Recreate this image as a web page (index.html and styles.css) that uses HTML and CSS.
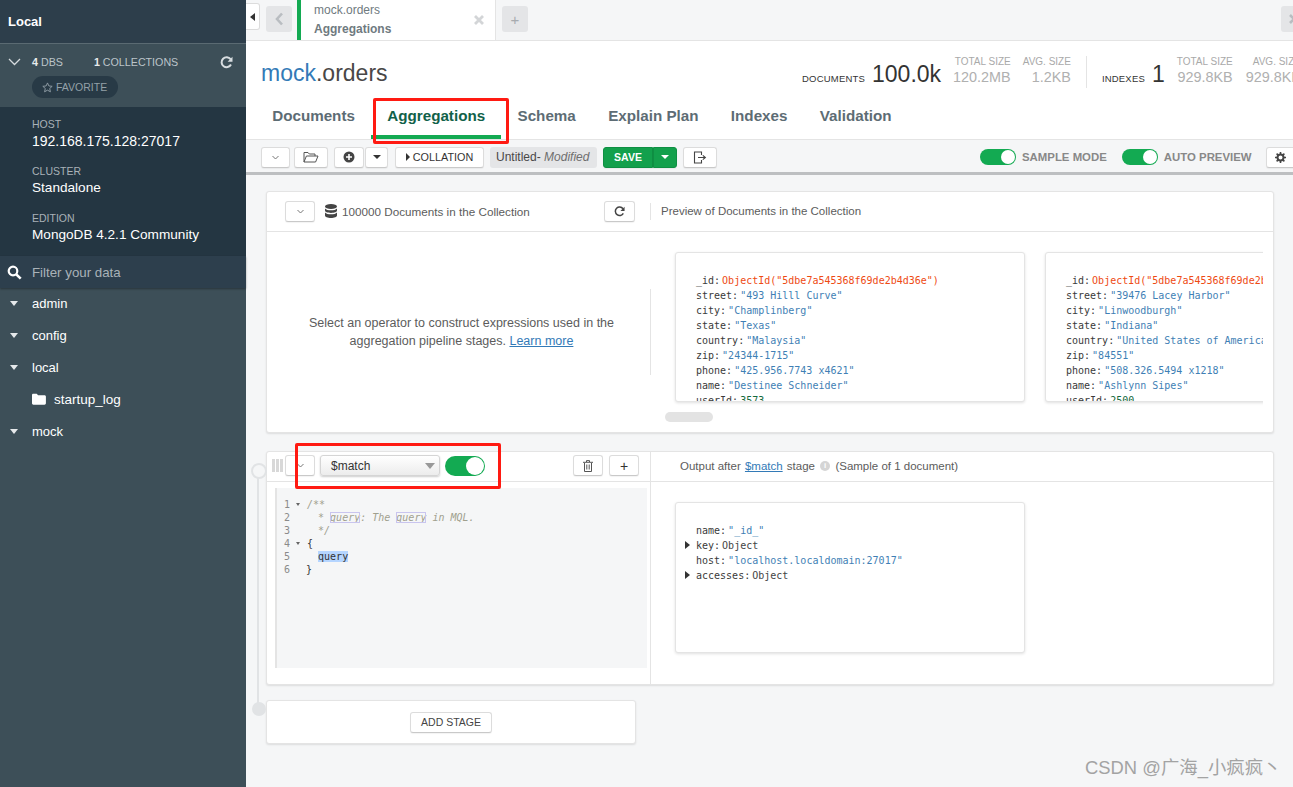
FILE: index.html
```html
<!DOCTYPE html>
<html lang="en">
<head>
    <meta charset="utf-8">
    <title>MongoDB Compass - mock.orders</title>
    <link rel="stylesheet" href="styles.css">
</head>
<body>
    <div class="app">
        <aside class="sidebar">
            <div class="sidebarTitle">Local</div>
            <div class="statsBlock">
                <div class="statsRow">
                    <svg class="statsChevron" width="13" height="8" viewBox="0 0 13 8"><path d="M1 1l5.5 5.5L12 1" fill="none" stroke="#d5dadd" stroke-width="1.3"/></svg>
                    <span class="statCount"><b>4</b> DBS</span>
                    <span class="statCount statCollections"><b>1</b> COLLECTIONS</span>
                    <svg class="statsRefresh" width="13" height="13" viewBox="0 0 13 13"><path d="M10.6 3.2A5 5 0 1 0 11 8.6" fill="none" stroke="#d8dde0" stroke-width="2"/><path d="M12.5 .8v5H7.6z" fill="#d8dde0"/></svg>
                </div>
                <div class="favorite">
                    <svg width="11" height="11" viewBox="0 0 12 12"><path d="M6 1l1.5 3.3 3.6.4-2.7 2.4.8 3.6L6 8.9l-3.2 1.8.8-3.6L.9 4.7l3.6-.4z" fill="none" stroke="#93a0a8" stroke-width="1"/></svg>
                    FAVORITE
                </div>
            </div>
            <div class="instanceInfo">
                <p class="infoLabel">HOST</p>
                <p class="infoValue infoHost">192.168.175.128:27017</p>
                <p class="infoLabel">CLUSTER</p>
                <p class="infoValue">Standalone</p>
                <p class="infoLabel">EDITION</p>
                <p class="infoValue">MongoDB 4.2.1 Community</p>
            </div>
            <div class="filterBox">
                <svg width="15" height="15" viewBox="0 0 15 15"><circle cx="6" cy="6" r="4.3" fill="none" stroke="#fff" stroke-width="2.2"/><path d="M9.3 9.3l4.4 4.4" stroke="#fff" stroke-width="2.6"/></svg>
                <span>Filter your data</span>
            </div>
            <ul class="dbList">
                <li class="dbRow"><i class="caret"></i>admin</li>
                <li class="dbRow"><i class="caret"></i>config</li>
                <li class="dbRow"><i class="caret"></i>local</li>
                <li class="dbRow collRow">
                    <svg width="14" height="12" viewBox="0 0 14 12"><path d="M0 2.2C0 1.3.6.8 1.4.8h3.3l1.4 1.5h6.4c.8 0 1.4.6 1.4 1.4v6.6c0 .8-.6 1.4-1.4 1.4H1.4C.6 11.7 0 11.1 0 10.3z" fill="#fff"/></svg>
                    startup_log
                </li>
                <li class="dbRow"><i class="caret"></i>mock</li>
            </ul>
        </aside>

        <main class="main">
            <div class="tabBar">
                <button class="collapseBtn"><i class="caretLeft"></i></button>
                <button class="tabNav">
                    <svg width="9" height="14" viewBox="0 0 9 14"><path d="M7 1.5L2 7l5 5.5" fill="none" stroke="#b9bdc1" stroke-width="2.6"/></svg>
                </button>
                <div class="openTab">
                    <div>
                        <p class="openTabNs">mock.orders</p>
                        <p class="openTabName">Aggregations</p>
                    </div>
                    <svg width="10" height="10" viewBox="0 0 10 10"><path d="M1 1l8 8M9 1l-8 8" stroke="#d3d5d7" stroke-width="2.8"/></svg>
                </div>
                <button class="tabNav tabAdd">+</button>
                <button class="tabNav tabEnd">
                    <svg width="10" height="10" viewBox="0 0 10 10"><path d="M1 1l8 8M9 1l-8 8" stroke="#b9bdc1" stroke-width="2.6"/></svg>
                </button>
            </div>

            <header class="collHeader">
                <div class="collTop">
                    <h1 class="collName"><span class="dbName">mock</span>.orders</h1>
                    <div class="collStats">
                        <span class="statName">DOCUMENTS</span>
                        <span class="statBig">100.0k</span>
                        <div class="statSmall statGap1"><span>TOTAL SIZE</span><em>120.2MB</em></div>
                        <div class="statSmall statGap2"><span>AVG. SIZE</span><em>1.2KB</em></div>
                        <div class="statDivider"></div>
                        <span class="statName">INDEXES</span>
                        <span class="statBig">1</span>
                        <div class="statSmall statGap3"><span>TOTAL SIZE</span><em>929.8KB</em></div>
                        <div class="statSmall statGap4"><span>AVG. SIZE</span><em>929.8KB</em></div>
                    </div>
                </div>
                <nav class="collTabs">
                    <a class="collTab">Documents</a>
                    <a class="collTab active">Aggregations</a>
                    <a class="collTab">Schema</a>
                    <a class="collTab">Explain Plan</a>
                    <a class="collTab">Indexes</a>
                    <a class="collTab">Validation</a>
                </nav>
            </header>

            <div class="toolbar">
                <button class="btn btnChevron"><svg width="7" height="5" viewBox="0 0 7 5"><path d="M.5 1l3 3 3-3" fill="none" stroke="#777" stroke-width="1"/></svg></button>
                <button class="btn btnFolder"><svg width="16" height="12" viewBox="0 0 16 12"><path d="M1 11V1.5h4l1.3 1.5H12v2M1 11l2.4-6H15l-2.4 6z" fill="none" stroke="#555" stroke-width="1"/></svg></button>
                <button class="btn btnPlus"><svg width="12" height="12" viewBox="0 0 12 12"><circle cx="6" cy="6" r="5.500" fill="#444"/><path d="M6 3v6M3 6h6" stroke="#fff" stroke-width="1.600"/></svg></button>
                <button class="btn btnCaret"><i class="caretDown"></i></button>
                <button class="btn btnCollation"><i class="caretRight"></i>COLLATION</button>
                <div class="pipelineName">Untitled<span>-&nbsp;</span><em>Modified</em></div>
                <button class="btn btnSave">SAVE</button>
                <button class="btn btnSaveCaret"><i class="caretDown caretWhite"></i></button>
                <button class="btn btnExport"><svg width="14" height="13" viewBox="0 0 14 13"><path d="M8.500 4V1H1.500v11h7V9" fill="none" stroke="#444" stroke-width="1.100"/><path d="M5 6.500h6.500M9.800 4.300l2.600 2.200-2.600 2.200" fill="none" stroke="#444" stroke-width="1.100"/></svg></button>
                <div class="toolbarRight">
                    <span class="toggle toggleSmall"><i></i></span>
                    <span class="toggleLabel">SAMPLE MODE</span>
                    <span class="toggle toggleSmall toggleGap"><i></i></span>
                    <span class="toggleLabel">AUTO PREVIEW</span>
                    <button class="btn btnGear"><svg width="11" height="11" viewBox="0 0 11 11"><circle cx="5.500" cy="5.500" r="3" fill="none" stroke="#444" stroke-width="2"/><path d="M5.500 0v2M5.500 9v2M0 5.500h2M9 5.500h2M1.600 1.600L3 3M8 8l1.400 1.400M1.600 9.400L3 8M8 3l1.400-1.400" stroke="#444" stroke-width="1.600"/></svg></button>
                </div>
            </div>

            <div class="workspace">
                <section class="card inputCard">
                    <div class="cardHeader">
                        <div class="cardHeaderLeft">
                            <button class="btn btnChevronLg"><svg width="7" height="5" viewBox="0 0 7 5"><path d="M.5 1l3 3 3-3" fill="none" stroke="#777" stroke-width="1"/></svg></button>
                            <svg class="dbIcon" width="12" height="14" viewBox="0 0 12 14"><ellipse cx="6" cy="2.500" rx="6" ry="2.500" fill="#444"/><path d="M0 4.400c1 1.300 3.400 1.900 6 1.900s5-.6 6-1.900v2.200C12 8 9.300 9 6 9S0 8 0 6.600zM0 8.400c1 1.300 3.400 1.900 6 1.900s5-.6 6-1.900v3.100C12 12.900 9.300 14 6 14s-6-1.100-6-2.500z" fill="#444"/></svg>
                            <span class="docCount">100000 Documents in the Collection</span>
                            <button class="btn btnRefresh"><svg width="11" height="11" viewBox="0 0 13 13"><path d="M10.600 3.200A5 5 0 1 0 11 8.600" fill="none" stroke="#444" stroke-width="1.800"/><path d="M12.500 .8v5H7.600z" fill="#444"/></svg></button>
                        </div>
                        <div class="headerDivider"></div>
                        <span class="previewTitle">Preview of Documents in the Collection</span>
                    </div>
                    <div class="inputBody">
                        <div class="inputHint">
                            <p>Select an operator to construct expressions used in the aggregation pipeline stages. <a>Learn more</a></p>
                        </div>
                        <div class="previewScroll">
                            <div class="docCards">
                                <div class="docCard">
                                    <div class="docLine"><span class="key">_id:</span><span class="oid">ObjectId("5dbe7a545368f69de2b4d36e")</span></div>
                                    <div class="docLine"><span class="key">street:</span><span class="str">"493 Hilll Curve"</span></div>
                                    <div class="docLine"><span class="key">city:</span><span class="str">"Champlinberg"</span></div>
                                    <div class="docLine"><span class="key">state:</span><span class="str">"Texas"</span></div>
                                    <div class="docLine"><span class="key">country:</span><span class="str">"Malaysia"</span></div>
                                    <div class="docLine"><span class="key">zip:</span><span class="str">"24344-1715"</span></div>
                                    <div class="docLine"><span class="key">phone:</span><span class="str">"425.956.7743 x4621"</span></div>
                                    <div class="docLine"><span class="key">name:</span><span class="str">"Destinee Schneider"</span></div>
                                    <div class="docLine"><span class="key">userId:</span><span class="num">3573</span></div>
                                </div>
                                <div class="docCard">
                                    <div class="docLine"><span class="key">_id:</span><span class="oid">ObjectId("5dbe7a545368f69de2b4d36f")</span></div>
                                    <div class="docLine"><span class="key">street:</span><span class="str">"39476 Lacey Harbor"</span></div>
                                    <div class="docLine"><span class="key">city:</span><span class="str">"Linwoodburgh"</span></div>
                                    <div class="docLine"><span class="key">state:</span><span class="str">"Indiana"</span></div>
                                    <div class="docLine"><span class="key">country:</span><span class="str">"United States of America"</span></div>
                                    <div class="docLine"><span class="key">zip:</span><span class="str">"84551"</span></div>
                                    <div class="docLine"><span class="key">phone:</span><span class="str">"508.326.5494 x1218"</span></div>
                                    <div class="docLine"><span class="key">name:</span><span class="str">"Ashlynn Sipes"</span></div>
                                    <div class="docLine"><span class="key">userId:</span><span class="num">2500</span></div>
                                </div>
                            </div>
                            <div class="scrollThumb"></div>
                        </div>
                    </div>
                </section>

                <div class="stagesWrap">
                    <section class="card stageCard">
                        <div class="cardHeader stageHeader">
                            <div class="stageLeft">
                                <span class="grip"></span>
                                <button class="btn btnChevronLg btnStage"><svg width="7" height="5" viewBox="0 0 7 5"><path d="M.5 1l3 3 3-3" fill="none" stroke="#777" stroke-width="1"/></svg></button>
                                <div class="stageSelect">$match<i class="caretSelect"></i></div>
                                <span class="toggle toggleBig"><i></i></span>
                                <button class="btn btnStage btnTrash"><svg width="10" height="12" viewBox="0 0 10 12"><path d="M1.500 3v8.500h7V3M0 2.300h10M3.500 2V.6h3V2M3.800 4.500v5M6.200 4.500v5" fill="none" stroke="#555" stroke-width="1"/></svg></button>
                                <button class="btn btnStage btnAdd">+</button>
                            </div>
                            <div class="stageOutTitle">Output after <a>$match</a> stage <span class="infoDot">i</span> (Sample of 1 document)</div>
                        </div>
                        <div class="stageBody">
                            <div class="editorCol">
                                <div class="editor">
                                    <div class="codeLine"><span class="ln">1</span><i class="fold"></i><span class="cmt">/**</span></div>
                                    <div class="codeLine"><span class="ln">2</span><i class="foldNone"></i><span class="cmt">&nbsp;&nbsp;* <mark class="hit">query</mark>: The <mark class="hit">query</mark> in MQL.</span></div>
                                    <div class="codeLine"><span class="ln">3</span><i class="foldNone"></i><span class="cmt">&nbsp;&nbsp;*/</span></div>
                                    <div class="codeLine"><span class="ln">4</span><i class="fold"></i><span>{</span></div>
                                    <div class="codeLine"><span class="ln">5</span><i class="foldNone"></i><span>&nbsp;&nbsp;<mark class="sel">query</mark></span></div>
                                    <div class="codeLine"><span class="ln">6</span><i class="foldNone"></i><span>}</span></div>
                                </div>
                            </div>
                            <div class="outputCol">
                                <div class="docCard outCard">
                                    <div class="docLine"><span class="key">name:</span><span class="str">"_id_"</span></div>
                                    <div class="docLine"><i class="expand"></i><span class="key">key:</span><span class="val">Object</span></div>
                                    <div class="docLine"><span class="key">host:</span><span class="str">"localhost.localdomain:27017"</span></div>
                                    <div class="docLine"><i class="expand"></i><span class="key">accesses:</span><span class="val">Object</span></div>
                                </div>
                            </div>
                        </div>
                    </section>
                    <section class="card addStage">
                        <button class="btn btnAddStage">ADD STAGE</button>
                    </section>
                </div>
            </div>
        </main>
    </div>

    <div class="redBox redTab"></div>
    <div class="redBox redStage"></div>
    <div class="watermark">CSDN @广海_小疯疯丶</div>
</body>
</html>
```

FILE: styles.css
```css
* {
    box-sizing: border-box;
    margin: 0;
    padding: 0;
}
html, body {
    height: 100%;
    overflow: hidden;
}
body {
    font-family: "Liberation Sans", Arial, sans-serif;
    color: #494747;
    background: #f5f6f7;
}
button {
    font-family: inherit;
}
.app {
    display: flex;
    height: 787px;
}

/* sidebar */
.sidebar {
    width: 246px;
    flex: none;
    background: #3d4f58;
    color: #fff;
}
.sidebarTitle {
    height: 44px;
    padding: 14px 0 0 8px;
    font-size: 13px;
    font-weight: bold;
    background: #2d3e4b;
    border-bottom: 1px solid #5a6a72;
}
.statsBlock {
    height: 63px;
    padding-top: 11px;
    background: #3d4f58;
}
.statsRow {
    display: flex;
    align-items: center;
    height: 14px;
    font-size: 10.7px;
    color: #bcc4c9;
}
.statsChevron {
    margin-left: 8px;
    margin-right: 11px;
}
.statCount b {
    color: #e8ebec;
}
.statCollections {
    margin-left: 31px;
}
.statsRefresh {
    margin-left: auto;
    margin-right: 13px;
}
.favorite {
    display: flex;
    align-items: center;
    gap: 3px;
    width: 86px;
    height: 22px;
    margin: 7px 0 0 32px;
    padding-left: 10px;
    border-radius: 11px;
    background: #283a46;
    font-size: 10.5px;
    color: #93a0a8;
}
.instanceInfo {
    height: 149px;
    padding: 10px 0 0 32px;
    background: #243642;
}
.infoLabel {
    font-size: 10.5px;
    line-height: 14px;
    color: #a9b2b8;
}
.infoValue {
    font-size: 13.6px;
    line-height: 20px;
    color: #fff;
    margin-bottom: 13px;
}
.infoHost {
    font-size: 14px;
}
.filterBox {
    display: flex;
    align-items: center;
    height: 32px;
    padding-left: 7px;
    gap: 10px;
    background: #2d3f4d;
    font-size: 13.3px;
    color: #a9b2b8;
    box-shadow: 0 1px 2px rgba(0,0,0,.35);
    position: relative;
}
.dbList {
    list-style: none;
    margin-top: -1px;
}
.dbRow {
    display: flex;
    align-items: center;
    height: 32px;
    padding-left: 32px;
    font-size: 13px;
    color: #fff;
    position: relative;
}
.caret {
    width: 0;
    height: 0;
    margin-left: -22px;
    margin-right: 14px;
    border-left: 4px solid transparent;
    border-right: 4px solid transparent;
    border-top: 5px solid #e6e9eb;
}
.collRow {
    gap: 8px;
    font-size: 13.5px;
}

/* tabs */
.main {
    flex: 1;
    min-width: 0;
    overflow: hidden;
}
.tabBar {
    display: flex;
    height: 41px;
    background: #f5f6f7;
    border-bottom: 1px solid #e4e4e4;
}
.collapseBtn {
    width: 14px;
    height: 27px;
    margin-top: 3px;
    background: #fff;
    border: 1px solid #dcdcdc;
    border-left: 0;
    border-radius: 0 3px 3px 0;
    display: flex;
    align-items: center;
    justify-content: center;
    flex: none;
}
.caretLeft {
    border-top: 4px solid transparent;
    border-bottom: 4px solid transparent;
    border-right: 5px solid #333;
}
.tabNav {
    width: 26px;
    height: 26px;
    margin: 6px 0 0 6px;
    background: #e4e5e7;
    border: 0;
    border-radius: 3px;
    display: flex;
    align-items: center;
    justify-content: center;
    flex: none;
}
.openTab {
    width: 199px;
    height: 40px;
    margin-left: 5px;
    padding: 0 11px 1px 13px;
    background: #fff;
    border-left: 4px solid #13aa52;
    border-right: 1px solid #e4e4e4;
    display: flex;
    justify-content: space-between;
    align-items: center;
    flex: none;
}
.openTabNs {
    font-size: 12px;
    line-height: 18px;
    color: #6f7a80;
}
.openTabName {
    font-size: 12px;
    font-weight: bold;
    line-height: 20px;
    color: #6f7a80;
}
.tabAdd {
    font-size: 15px;
    color: #a7abaf;
}
.tabEnd {
    margin-left: 753px;
}

/* collection header */
.collHeader {
    height: 98px;
    background: #fff;
}
.collTop {
    display: flex;
    height: 57px;
    padding: 16px 0 0 15px;
    white-space: nowrap;
}
.collName {
    font-size: 23px;
    font-weight: normal;
    line-height: 32px;
    color: #494747;
    width: 541px;
    flex: none;
}
.dbName {
    color: #337ab7;
}
.collStats {
    display: flex;
    align-items: flex-start;
    flex: none;
}
.statName {
    font-size: 9.5px;
    letter-spacing: .2px;
    color: #333;
    margin-top: 16px;
}
.statBig {
    font-size: 23px;
    line-height: 28px;
    margin: 3px 0 0 7px;
    color: #333;
}
.statSmall {
    display: flex;
    flex-direction: column;
    align-items: flex-end;
    margin-top: -2px;
}
.statSmall span {
    font-size: 10px;
    line-height: 14px;
    color: #a9a9a9;
}
.statSmall em {
    font-style: normal;
    font-size: 14.4px;
    line-height: 17px;
    color: #b0b0b0;
}
.statGap1 {
    margin-left: 12px;
}
.statGap2 {
    margin-left: 12px;
}
.statDivider {
    width: 1px;
    height: 32px;
    margin: -1px 15px 0 15px;
    background: #e4e4e4;
}
.statGap3 {
    margin-left: 12px;
}
.statGap4 {
    margin-left: 13px;
}
.collTabs {
    display: flex;
    padding-left: 10px;
    height: 41px;
}
.collTab {
    padding: 8px 16.2px 0;
    font-size: 15.2px;
    font-weight: bold;
    line-height: 20px;
    color: #5d6c74;
    border-bottom: 4px solid transparent;
}
.collTab.active {
    color: #116149;
    border-bottom-color: #13aa52;
    border-top-right-radius: 3px;
}

/* shared buttons */
.btn {
    display: flex;
    align-items: center;
    justify-content: center;
    flex: none;
    height: 21px;
    background: #fff;
    border: 1px solid #dcdcdc;
    border-bottom-color: #c9c9c9;
    border-radius: 3px;
    color: #333;
    box-shadow: 0 1px 1px rgba(0,0,0,.05);
}

/* toolbar */
.toolbar {
    display: flex;
    align-items: center;
    height: 36px;
    padding: 2px 0 0 15px;
    background: #f5f6f7;
    border-top: 1px solid #e4e4e4;
    border-bottom: 3px solid #bdbfc1;
    white-space: nowrap;
}
.btnChevron {
    width: 29px;
}
.btnFolder {
    width: 34px;
    margin-left: 4px;
}
.btnPlus {
    width: 30px;
    margin-left: 6px;
}
.btnCaret {
    width: 23px;
    margin-left: 1px;
}
.caretDown {
    border-left: 4px solid transparent;
    border-right: 4px solid transparent;
    border-top: 4px solid #333;
}
.caretWhite {
    border-top-color: #fff;
}
.btnCollation {
    width: 89px;
    margin-left: 7px;
    font-size: 10.8px;
    gap: 3px;
}
.caretRight {
    border-top: 4px solid transparent;
    border-bottom: 4px solid transparent;
    border-left: 4px solid #333;
}
.pipelineName {
    width: 107px;
    height: 21px;
    margin-left: 6px;
    padding-left: 6px;
    background: #e4e5e7;
    border-radius: 3px;
    font-size: 12px;
    line-height: 21px;
    color: #494747;
    flex: none;
}
.pipelineName em {
    color: #6f6f6f;
}
.btnSave {
    width: 50px;
    margin-left: 6px;
    background: #13a04c;
    border-color: #0f8f43;
    border-radius: 3px 0 0 3px;
    color: #fff;
    font-size: 10.5px;
    font-weight: bold;
}
.btnSaveCaret {
    width: 24px;
    background: #13a04c;
    border-color: #0f8f43;
    border-radius: 0 3px 3px 0;
}
.btnExport {
    width: 34px;
    margin-left: 6px;
}
.toolbarRight {
    display: flex;
    align-items: center;
    margin-left: 263px;
    flex: none;
}
.toggle {
    display: block;
    position: relative;
    flex: none;
    background: #13aa52;
}
.toggle i {
    position: absolute;
    background: #fff;
    border-radius: 50%;
}
.toggleSmall {
    width: 36px;
    height: 16px;
    border-radius: 8px;
}
.toggleSmall i {
    right: 1px;
    top: 1px;
    width: 14px;
    height: 14px;
}
.toggleGap {
    margin-left: 15px;
}
.toggleLabel {
    margin-left: 6px;
    font-size: 11.4px;
    color: #888;
    font-weight: bold;
}
.btnGear {
    width: 30px;
    margin-left: 14px;
}

/* workspace */
.workspace {
    height: 612px;
    padding: 16px 19px 0 20px;
}
.card {
    background: #fff;
    border: 1px solid #e4e4e4;
    border-radius: 3px;
    box-shadow: 0 1px 2px rgba(0,0,0,.1);
}
.inputCard {
    height: 242px;
}
.cardHeader {
    display: flex;
    align-items: center;
    height: 40px;
    padding-bottom: 1px;
    border-bottom: 1px solid #e4e4e4;
}
.cardHeaderLeft {
    display: flex;
    align-items: center;
    width: 368px;
    padding-left: 18px;
    flex: none;
}
.btnChevronLg {
    width: 30px;
}
.dbIcon {
    margin-left: 10px;
}
.docCount {
    margin-left: 5px;
    font-size: 11.7px;
    color: #5c5c5c;
}
.btnRefresh {
    width: 31px;
    margin-left: auto;
}
.headerDivider {
    width: 1px;
    height: 17px;
    margin-left: 15px;
    background: #e4e4e4;
}
.previewTitle {
    margin-left: 10px;
    font-size: 11.5px;
    color: #5c5c5c;
}
.inputBody {
    display: flex;
    height: 200px;
}
.inputHint {
    width: 384px;
    flex: none;
    height: 86px;
    margin-top: 57px;
    padding-left: 6px;
    display: flex;
    align-items: center;
    justify-content: center;
    border-right: 1px solid #e4e4e4;
    text-align: center;
}
.inputHint p {
    width: 340px;
    font-size: 12.5px;
    line-height: 18px;
    color: #5c5c5c;
}
.inputHint a, .stageOutTitle a {
    color: #337ab7;
    text-decoration: underline;
}
.previewScroll {
    position: relative;
    width: 612px;
    overflow: hidden;
    padding: 20px 0 0 24px;
}
.docCards {
    display: flex;
    gap: 20px;
    width: 800px;
}
.docCard {
    width: 350px;
    height: 150px;
    flex: none;
    padding: 20px 0 0 20px;
    background: #fff;
    border: 1px solid #e4e4e4;
    border-radius: 3px;
    box-shadow: 0 1px 3px rgba(0,0,0,.12);
    overflow: hidden;
    font-family: "DejaVu Sans Mono", "Liberation Mono", monospace;
    font-size: 10px;
    line-height: 15px;
    white-space: nowrap;
}
.docLine {
    position: relative;
}
.key {
    color: #3a3a3a;
    margin-right: 2px;
}
.oid {
    color: #ee4a12;
}
.str {
    color: #3f7fb5;
}
.num {
    color: #14693c;
}
.val {
    color: #444;
}
.scrollThumb {
    width: 48px;
    height: 10px;
    margin: 10px 0 0 -10px;
    border-radius: 5px;
    background: #e3e3e3;
}

/* stages */
.stagesWrap {
    position: relative;
    margin-top: 18px;
}
.stagesWrap::before {
    content: "";
    position: absolute;
    left: -9px;
    top: 18px;
    width: 2px;
    height: 238px;
    background: #e1e3e5;
}
.stageCard::before, .addStage::before {
    content: "";
    position: absolute;
    left: -15px;
    width: 12px;
    height: 12px;
    border-radius: 50%;
    background: #f5f6f7;
    border: 2px solid #e1e3e5;
}
.stageCard::before {
    top: 12px;
}
.addStage::before {
    top: 251px;
    left: -14px;
    width: 10px;
    height: 10px;
    background: #e1e3e5;
}
.stageCard {
    height: 234px;
}
.stageHeader {
    height: 30px;
    padding-bottom: 0;
}
.stageLeft {
    display: flex;
    align-items: center;
    width: 384px;
    height: 100%;
    padding: 0 0 2px 5px;
    border-right: 1px solid #e4e4e4;
    flex: none;
}
.grip {
    width: 11px;
    height: 13px;
    background: repeating-linear-gradient(90deg, #d8d8d8 0 3px, #fff 3px 4px);
}
.btnStage {
    width: 30px;
}
.stageLeft .btnChevronLg {
    margin-left: 2px;
}
.stageSelect {
    display: flex;
    align-items: center;
    justify-content: space-between;
    width: 120px;
    height: 21px;
    margin-left: 5px;
    padding: 0 4px 0 10px;
    border: 1px solid #d5d5d5;
    border-radius: 3px;
    background: linear-gradient(#fff, #ececec);
    box-shadow: 0 1px 2px rgba(0,0,0,.2);
    font-size: 12px;
    color: #333;
}
.caretSelect {
    border-left: 5px solid transparent;
    border-right: 5px solid transparent;
    border-top: 6px solid #999;
}
.toggleBig {
    width: 40px;
    height: 20px;
    margin-left: 5px;
    border-radius: 10px;
}
.toggleBig i {
    right: 1px;
    top: 1px;
    width: 18px;
    height: 18px;
}
.btnTrash {
    margin-left: 88px;
}
.btnAdd {
    margin-left: 6px;
    font-size: 14px;
}
.stageOutTitle {
    margin: -2px 0 0 29px;
    font-size: 11.5px;
    color: #5c5c5c;
    display: flex;
    align-items: center;
    gap: 1px;
    white-space: pre;
}
.infoDot {
    display: inline-block;
    width: 10px;
    height: 10px;
    margin: 0 1px;
    border-radius: 50%;
    background: #d5d5d5;
    color: #fff;
    font-size: 8px;
    line-height: 10px;
    text-align: center;
    font-weight: bold;
}
.stageBody {
    display: flex;
    height: 202px;
}
.editorCol {
    width: 384px;
    flex: none;
    padding: 6px 3px 0 8px;
    border-right: 1px solid #e4e4e4;
}
.editor {
    height: 180px;
    padding: 10px 0 0 7px;
    background: #f5f6f7;
    border-left: 2px solid #e4e4e4;
    font-family: "DejaVu Sans Mono", "Liberation Mono", monospace;
    font-size: 10px;
    line-height: 13px;
    color: #333;
}
.codeLine {
    display: flex;
    align-items: center;
    height: 13px;
}
.ln {
    width: 10px;
    color: #8a8a8a;
}
.fold, .foldNone {
    display: block;
    width: 12px;
    height: 0;
}
.fold {
    width: 0;
    margin: 0 7px 0 2px;
    border-left: 2.5px solid transparent;
    border-right: 2.5px solid transparent;
    border-top: 3px solid #666;
}
.cmt {
    color: #a0a08e;
    font-style: italic;
}
.hit {
    background: transparent;
    color: inherit;
    outline: 1px solid #c9c5ee;
    outline-offset: -1px;
}
.sel {
    background: #b5d5ff;
    color: #333;
}
.outputCol {
    padding: 20px 0 0 24px;
}
.outCard {
    height: 151px;
}
.expand {
    position: absolute;
    left: -11px;
    top: 3px;
    border-top: 4px solid transparent;
    border-bottom: 4px solid transparent;
    border-left: 5px solid #333;
}
.addStage {
    width: 370px;
    height: 44px;
    margin-top: 15px;
    display: flex;
    align-items: center;
    justify-content: center;
}
.btnAddStage {
    width: 82px;
    font-size: 10.5px;
    color: #444;
}

/* annotations on the screenshot */
.redBox {
    position: absolute;
    border: 3px solid #ff1a12;
    border-radius: 2px;
    pointer-events: none;
}
.redTab {
    left: 373px;
    top: 98px;
    width: 136px;
    height: 46px;
}
.redStage {
    left: 295px;
    top: 443px;
    width: 206px;
    height: 46px;
}
.watermark {
    position: absolute;
    left: 1085px;
    top: 757px;
    font-family: "Liberation Sans", "Noto Sans CJK SC", sans-serif;
    font-size: 18.4px;
    line-height: 22px;
    color: #a3a3a3;
    white-space: nowrap;
}
```
